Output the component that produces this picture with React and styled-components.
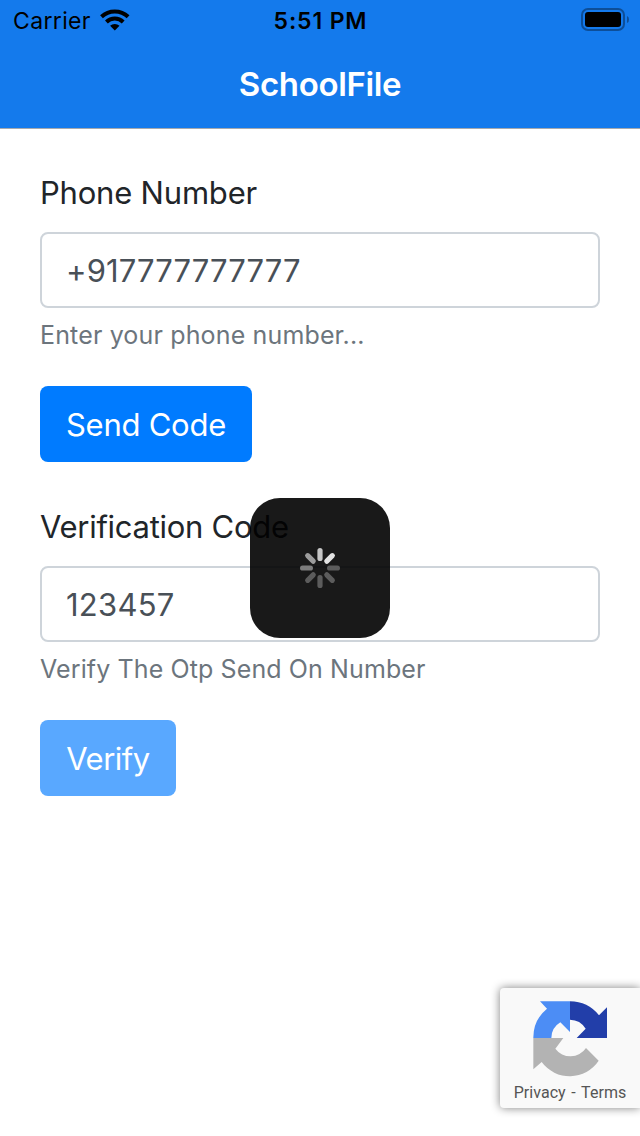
import React from "react";
import styled, { createGlobalStyle } from "styled-components";

const GlobalStyle = createGlobalStyle`
  * { box-sizing: border-box; }
  body { margin: 0; background: #fff; }
`;

const Screen = styled.div`
  position: relative;
  width: 640px;
  height: 1136px;
  overflow: hidden;
  background: #fff;
  font-family: Inter, "Liberation Sans", sans-serif;
`;

const Header = styled.header`
  height: 129px;
  background: #147aec;
  border-bottom: 1px solid #a5a9ae;
`;

const StatusBar = styled.div`
  display: grid;
  grid-template-columns: 1fr auto 1fr;
  align-items: center;
  height: 40px;
  padding: 0 11px 0 13px;
  color: #000;
`;

const Signal = styled.div`
  display: flex;
  align-items: center;
  gap: 9px;
`;

const Carrier = styled.span`
  font-size: 23px;
  line-height: 38px;
  padding-top: 2px;
  letter-spacing: 0.35px;
`;

const Clock = styled.span`
  font-size: 23px;
  line-height: 38px;
  padding-top: 2px;
  font-weight: 600;
  letter-spacing: 0.85px;
  margin-right: 1px;
`;

const Battery = styled.svg`
  justify-self: end;
`;

const Title = styled.h1`
  margin: 0;
  height: 88px;
  line-height: 88px;
  text-align: center;
  font-size: 33px;
  font-weight: 600;
  letter-spacing: -0.35px;
  color: #fff;
`;

const Form = styled.form`
  display: flex;
  flex-direction: column;
  gap: 41px;
  padding: 40px;
`;

const Section = styled.section`
  display: flex;
  flex-direction: column;
  align-items: flex-start;
`;

const Label = styled.label`
  height: 48px;
  line-height: 48px;
  margin-bottom: 15px;
  font-size: 31px;
  letter-spacing: ${(p) => p.$spacing};
  color: #212529;
`;

const Field = styled.input`
  width: 100%;
  height: 76px;
  padding: 0 24px;
  border: 2px solid #ced4da;
  border-radius: 8px;
  background: #fff;
  font: 400 31px Inter, "Liberation Sans", sans-serif;
  letter-spacing: ${(p) => p.$spacing};
  color: #495057;
  outline: none;
`;

const Hint = styled.small`
  height: 38px;
  line-height: 38px;
  margin: 8px 0 32px;
  font-size: 25px;
  letter-spacing: ${(p) => p.$spacing};
  color: #6c757d;
`;

const Button = styled.button`
  width: ${(p) => p.$width};
  height: 76px;
  padding: 0;
  border: 0;
  border-radius: 8px;
  background: ${(p) => (p.$muted ? "#59a8ff" : "#007bff")};
  color: #fff;
  font: 400 31px Inter, "Liberation Sans", sans-serif;
  letter-spacing: ${(p) => p.$spacing};
`;

const Loader = styled.div`
  position: absolute;
  left: 250px;
  top: 498px;
  display: grid;
  place-items: center;
  width: 140px;
  height: 140px;
  border-radius: 30px;
  background: rgba(0, 0, 0, 0.9);
`;

const Badge = styled.aside`
  position: absolute;
  right: 0;
  top: 988px;
  display: flex;
  flex-direction: column;
  align-items: center;
  width: 140px;
  height: 120px;
  padding-top: 10px;
  border-radius: 4px 0 0 4px;
  background: #f9f9f9;
  box-shadow: 0 0 10px gray;
`;

const Legal = styled.div`
  height: 30px;
  line-height: 30px;
  font-family: Roboto, sans-serif;
  font-size: 16px;
  letter-spacing: 0.05px;
  word-spacing: 1.6px;
  white-space: pre;
  color: #555;
`;

const SPOKES = ["#c6c6c6", "#e2e2e2", "#5c5c5c", "#5c5c5c", "#5c5c5c", "#5c5c5c", "#7c7c7c", "#9c9c9c"];

function Wifi() {
  return (
    <svg width="30" height="24" viewBox="0 0 30 24" fill="none" stroke="#000" strokeWidth="4">
      <path d="M1.5 8.8 A19.2 19.2 0 0 1 28.1 8.8" />
      <path d="M6.4 14 A12 12 0 0 1 23.2 14" />
      <path d="M10.1 17.8 A6.8 6.8 0 0 1 19.5 17.8 L14.8 22.6 Z" fill="#000" stroke="none" />
    </svg>
  );
}

function Spinner() {
  return (
    <svg width="40" height="40" viewBox="-20 -20 40 40">
      {SPOKES.map((color, i) => (
        <rect key={i} x="-2.6" y="-20" width="5.2" height="13" rx="2.6" fill={color} transform={`rotate(${i * 45})`} />
      ))}
    </svg>
  );
}

function RecaptchaLogo() {
  return (
    <svg width="80" height="80" viewBox="150 84 240 240">
      <path fill="#b3b3b3" d="M160 204H250L226 236A56 56 0 0 0 318 234L356 272A104 104 0 0 1 185 276L160 298Z" />
      <path fill="#4c8df5" d="M180 94H270V186L241 157A56 56 0 0 0 214 204H160A112 112 0 0 1 201 116Z" />
      <path fill="#223ea9" d="M270 94A112 112 0 0 1 357 136L381 112V204H290L317 176A56 56 0 0 0 270 149Z" />
    </svg>
  );
}

export default function App() {
  return (
    <Screen>
      <GlobalStyle />
      <Header>
        <StatusBar>
          <Signal>
            <Carrier>Carrier</Carrier>
            <Wifi />
          </Signal>
          <Clock>5:51 PM</Clock>
          <Battery width="48" height="24" viewBox="0 0 48 24">
            <rect x="1" y="1" width="42" height="21" rx="6" fill="none" stroke="#0d4e98" strokeWidth="2" />
            <rect x="4" y="4" width="36" height="15" rx="3" />
            <path d="M46 8Q48 8.5 48 11.5T46 15Z" fill="#0d4e98" />
          </Battery>
        </StatusBar>
        <Title>SchoolFile</Title>
      </Header>
      <Form>
        <Section>
          <Label htmlFor="phone" $spacing="-0.2px">Phone Number</Label>
          <Field id="phone" defaultValue="+917777777777" $spacing="0.12px" />
          <Hint $spacing="0.15px">Enter your phone number...</Hint>
          <Button type="button" $width="212px" $spacing="-0.25px">Send Code</Button>
        </Section>
        <Section>
          <Label htmlFor="code" $spacing="-0.28px">Verification Code</Label>
          <Field id="code" defaultValue="123457" $spacing="0.25px" />
          <Hint $spacing="0.11px">Verify The Otp Send On Number</Hint>
          <Button type="button" $muted $width="136px" $spacing="-0.5px">Verify</Button>
        </Section>
      </Form>
      <Loader>
        <Spinner />
      </Loader>
      <Badge>
        <RecaptchaLogo />
        <Legal>Privacy - Terms</Legal>
      </Badge>
    </Screen>
  );
}
